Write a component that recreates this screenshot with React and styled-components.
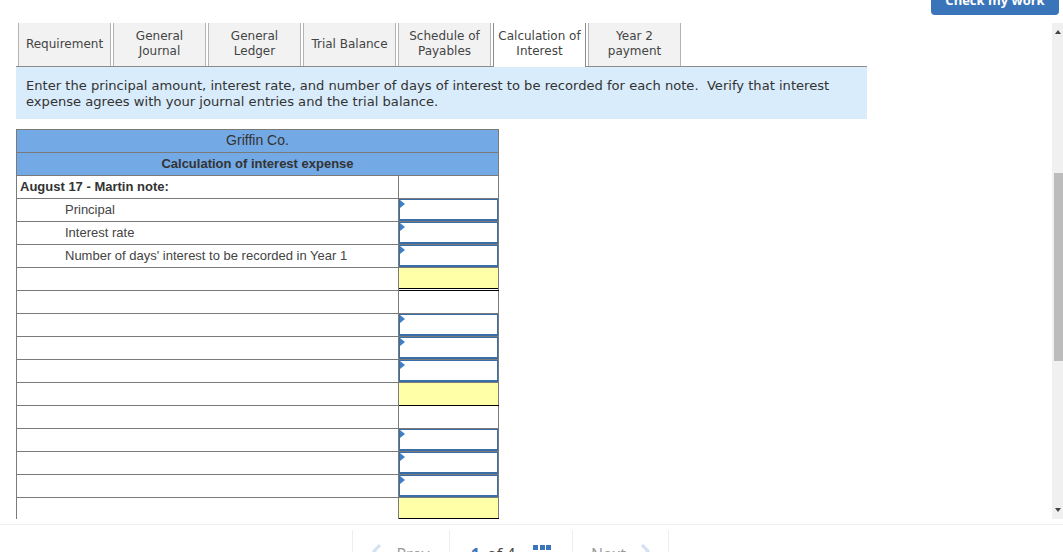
import React from "react";
import styled, { createGlobalStyle } from "styled-components";

const GlobalStyle = createGlobalStyle`
  html, body {
    margin: 0;
    padding: 0;
    background: #fff;
    overflow: hidden;
  }
`;

const Page = styled.div`
  width: 1063px;
  height: 552px;
  display: flex;
  flex-direction: column;
  overflow: hidden;
`;

const TopBar = styled.div`
  height: 23px;
  flex: none;
  display: flex;
  justify-content: flex-end;
  align-items: flex-end;
  padding: 0 4px 8px 0;
  box-sizing: border-box;
  overflow: hidden;
`;

const CheckButton = styled.button`
  width: 128px;
  height: 30px;
  flex: none;
  border: 0;
  border-radius: 4px;
  padding: 0;
  background: #3a75b9;
  color: #fff;
  font: bold 13px "Open Sans", sans-serif;
`;

const Middle = styled.div`
  height: 496px;
  flex: none;
  display: flex;
  overflow: hidden;
`;

const Content = styled.div`
  flex: 1;
  padding: 0 0 0 16px;
  overflow: hidden;
`;

const Tabs = styled.div`
  width: 851px;
  height: 44px;
  box-sizing: border-box;
  border-bottom: 1px solid #8c8c8c;
  padding-left: 2px;
  display: flex;
  gap: 2px;
`;

const Tab = styled.div`
  width: 93px;
  height: ${(p) => (p.$active ? "44px" : "43px")};
  box-sizing: border-box;
  padding-bottom: ${(p) => (p.$twoLines ? 2 : 0) + (p.$active ? 1 : 0)}px;
  border: solid #b4b4b4;
  border-width: 0 1px;
  border-color: ${(p) => (p.$active ? "#8c8c8c" : "#b4b4b4")};
  background: ${(p) => (p.$active ? "#fff" : "#f2f2f2")};
  display: flex;
  align-items: center;
  justify-content: center;
  text-align: center;
  color: #444;
  font: 12px/15px "DejaVu Sans", sans-serif;
`;

const Instructions = styled.div`
  width: 851px;
  height: 52px;
  box-sizing: border-box;
  padding: 11px 10px 0;
  background: #d9ecfb;
  color: #333;
  font: 13.1px/16px "DejaVu Sans", sans-serif;
`;

const Sheet = styled.table`
  width: 483px;
  margin-top: 10px;
  border-collapse: collapse;
  table-layout: fixed;
  color: #444;
  font: 13px "Liberation Sans", sans-serif;

  td {
    height: 20px;
    padding: 0 0 2px;
    border: 1px solid #7a7a7a;
    box-sizing: content-box;
  }
`;

const HeadCell = styled.td`
  background: #73a9e4;
  text-align: center;
  font-size: ${(p) => (p.$bold ? "13px" : "14px")};
  font-weight: ${(p) => (p.$bold ? "bold" : "normal")};
  color: #333;
`;

const LabelCell = styled.td`
  padding-left: ${(p) => (p.$indent ? "48px" : "3px")} !important;
  font-weight: ${(p) => (p.$bold ? "bold" : "normal")};
  color: ${(p) => (p.$bold ? "#333" : "#444")};
  ${(p) => p.$open && "border-bottom: 0 !important;"}
`;

const InputCell = styled.td`
  position: relative;
`;

const NoteInput = styled.div`
  position: absolute;
  inset: 0;
  border: 1px solid #3a6ea8;
  border-bottom-width: 2px;
  background: #fff;

  &::before {
    content: "";
    position: absolute;
    top: 0;
    left: 0;
    border-left: 5px solid #3f7fc7;
    border-top: 4px solid transparent;
    border-bottom: 4px solid transparent;
  }
`;

const TotalCell = styled.td`
  background: #ffffa8;
  border-top-color: #000 !important;
  border-bottom-color: #000 !important;
  ${(p) => p.$double && "box-shadow: inset 0 -1px 0 #fff, inset 0 -2px 0 #000;"}
`;

const LastRow = styled.tr`
  && td {
    height: 18px;
  }
`;

const Scrollbar = styled.div`
  width: 11px;
  flex: none;
  position: relative;
  background: #f0f0f0;
`;

const Thumb = styled.div`
  width: 9px;
  height: 188px;
  margin: 150px 0 0 2px;
  background: #bcbcbc;
`;

const Arrow = styled.div`
  position: absolute;
  left: 3px;
  ${(p) => (p.$down ? "bottom: 7px;" : "top: 7px;")}
  border-left: 3px solid transparent;
  border-right: 3px solid transparent;
  ${(p) => (p.$down ? "border-top: 4px solid #444;" : "border-bottom: 4px solid #444;")}
`;

const Footer = styled.div`
  flex: 1;
  margin-top: 5px;
  border-top: 1px solid #eee;
  padding: 5px 0 0 352px;
  display: flex;
  align-items: flex-start;
`;

const FooterItem = styled.div`
  width: ${(p) => p.$width}px;
  height: 40px;
  flex: none;
  box-sizing: border-box;
  border-left: 1px solid #eee;
  ${(p) => p.$last && "border-right: 1px solid #eee;"}
  display: flex;
  justify-content: center;
  gap: ${(p) => p.$gap || 14}px;
  padding-top: 14px;
  color: #999;
  font: 16px/20px "Open Sans", sans-serif;
`;

const PageNumber = styled.span`
  color: #444;
`;

const CurrentPage = styled.span`
  margin-right: 3px;
  color: #3a75b9;
  font-weight: bold;
`;

const Squares = styled.div`
  display: flex;
  gap: 1.5px;
  margin-top: 1px;
`;

const Square = styled.span`
  width: 5px;
  height: 5px;
  background: #3a75b9;
`;

const Chevron = ({ dir }) => (
  <svg width="10" height="14" viewBox="0 0 10 14">
    <path
      d={dir === "left" ? "M8 1 2 7l6 6" : "M2 1l6 6-6 6"}
      fill="none"
      stroke="#d3e2f2"
      strokeWidth="3"
    />
  </svg>
);

const tabs = [
  ["Requirement"],
  ["General", "Journal"],
  ["General", "Ledger"],
  ["Trial Balance"],
  ["Schedule of", "Payables"],
  ["Calculation of", "Interest"],
  ["Year 2", "payment"],
];

const indented = [
  "Principal",
  "Interest rate",
  "Number of days' interest to be recorded in Year 1",
];

function InputRows({ labels = ["", "", ""] }) {
  return labels.map((label, i) => (
    <tr key={i}>
      <LabelCell $indent>{label}</LabelCell>
      <InputCell>
        <NoteInput />
      </InputCell>
    </tr>
  ));
}

function TotalRow({ double }) {
  return (
    <tr>
      <LabelCell />
      <TotalCell $double={double} />
    </tr>
  );
}

function BlankRow({ children, bold }) {
  return (
    <tr>
      <LabelCell $bold={bold}>{children}</LabelCell>
      <td />
    </tr>
  );
}

export default function App() {
  return (
    <Page>
      <GlobalStyle />
      <TopBar>
        <CheckButton>Check my work</CheckButton>
      </TopBar>
      <Middle>
        <Content>
          <Tabs>
            {tabs.map((lines, i) => (
              <Tab key={i} $active={i === 5} $twoLines={lines.length > 1}>
                <span>
                  {lines.map((line) => (
                    <div key={line}>{line}</div>
                  ))}
                </span>
              </Tab>
            ))}
          </Tabs>
          <Instructions>
            Enter the principal amount, interest rate, and number of days of interest to be
            recorded for each note.&nbsp; Verify that interest
            <br />
            expense agrees with your journal entries and the trial balance.
          </Instructions>
          <Sheet>
            <colgroup>
              <col style={{ width: 382 }} />
              <col />
            </colgroup>
            <tbody>
              <tr>
                <HeadCell colSpan={2}>Griffin Co.</HeadCell>
              </tr>
              <tr>
                <HeadCell colSpan={2} $bold>
                  Calculation of interest expense
                </HeadCell>
              </tr>
              <BlankRow bold>August 17 - Martin note:</BlankRow>
              <InputRows labels={indented} />
              <TotalRow double />
              <BlankRow />
              <InputRows />
              <TotalRow />
              <BlankRow />
              <InputRows />
              <LastRow>
                <LabelCell $open />
                <TotalCell />
              </LastRow>
            </tbody>
          </Sheet>
        </Content>
        <Scrollbar>
          <Arrow />
          <Thumb />
          <Arrow $down />
        </Scrollbar>
      </Middle>
      <Footer>
        <FooterItem $width={97}>
          <Chevron dir="left" />
          <span>Prev</span>
        </FooterItem>
        <FooterItem $width={123} $gap={18}>
          <PageNumber>
            <CurrentPage>1</CurrentPage> of 4
          </PageNumber>
          <Squares>
            <Square />
            <Square />
            <Square />
          </Squares>
        </FooterItem>
        <FooterItem $width={97} $last>
          <span>Next</span>
          <Chevron dir="right" />
        </FooterItem>
      </Footer>
    </Page>
  );
}
